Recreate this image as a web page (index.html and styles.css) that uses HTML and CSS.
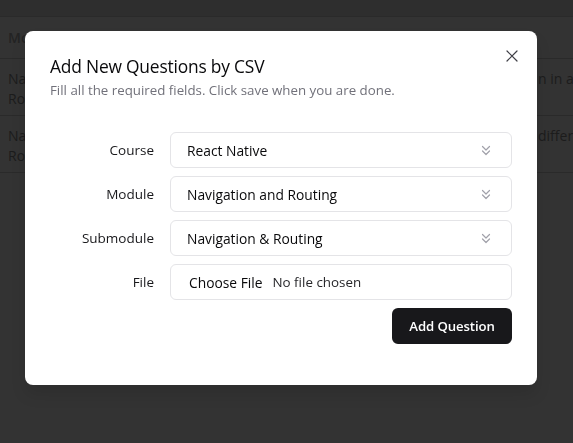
FILE: index.html
```html
<!DOCTYPE html>
<html>
<head>
<meta charset="utf-8">
<link rel="stylesheet" href="styles.css">
</head>
<body>
<div class="page">
  <div class="topband"></div>
  <div class="row head"><span class="c1">Module</span><span class="c2"></span></div>
  <div class="row"><span class="c1">Navigation and<br>Routing</span><span class="c2">n in a React Native app</span></div>
  <div class="row"><span class="c1">Navigation and<br>Routing</span><span class="c2">different navigators</span></div>
</div>
<div class="overlay">
  <div class="modal">
    <button class="close" aria-label="Close">
      <svg width="12" height="12" viewBox="0 0 12 12" fill="none" stroke="#3f3f46" stroke-width="1.2" stroke-linecap="round"><path d="M1 1l10 10M11 1 1 11"/></svg>
    </button>
    <div class="header">
      <h2 class="title">Add New Questions by CSV</h2>
      <p class="desc">Fill all the required fields. Click save when you are done.</p>
    </div>
    <div class="form">
      <div class="frow">
        <label class="lbl">Course</label>
        <div class="field select"><span>React Native</span><svg class="chev" width="10" height="11" viewBox="0 0 10 11" fill="none" stroke="#a1a1aa" stroke-width="1.2" stroke-linecap="round" stroke-linejoin="round"><path d="M1.5 1.5 5 5 8.5 1.5M1.5 6 5 9.5 8.5 6"/></svg></div>
      </div>
      <div class="frow">
        <label class="lbl">Module</label>
        <div class="field select"><span>Navigation and Routing</span><svg class="chev" width="10" height="11" viewBox="0 0 10 11" fill="none" stroke="#a1a1aa" stroke-width="1.2" stroke-linecap="round" stroke-linejoin="round"><path d="M1.5 1.5 5 5 8.5 1.5M1.5 6 5 9.5 8.5 6"/></svg></div>
      </div>
      <div class="frow">
        <label class="lbl">Submodule</label>
        <div class="field select"><span>Navigation &amp; Routing</span><svg class="chev" width="10" height="11" viewBox="0 0 10 11" fill="none" stroke="#a1a1aa" stroke-width="1.2" stroke-linecap="round" stroke-linejoin="round"><path d="M1.5 1.5 5 5 8.5 1.5M1.5 6 5 9.5 8.5 6"/></svg></div>
      </div>
      <div class="frow">
        <label class="lbl">File</label>
        <div class="field file"><span class="choose">Choose File</span><span class="nofile">No file chosen</span></div>
      </div>
    </div>
    <div class="footer">
      <button class="btn">Add Question</button>
    </div>
  </div>
</div>
</body>
</html>
```
FILE: styles.css
```css
* { box-sizing: border-box; }
html, body { margin: 0; padding: 0; }
body {
  width: 573px; height: 443px; overflow: hidden;
  background: #333333;
  font-family: "Open Sans", "Noto Sans", sans-serif;
  color: #1f1f1f;
}
.page { width: 573px; }
.topband { height: 17px; background: #2e2e2e; border-bottom: 1px solid #2a2a2a; }
.row {
  display: flex; justify-content: space-between;
  border-bottom: 1px solid #2a2a2a;
  height: 57px; padding: 10px 0 0 8px; font-size: 14px; line-height: 20px; color: #1c1c1c;
}
.row.head { height: 42px; padding-top: 11px; font-weight: 600; color: #232323; }
.c1 { width: 140px; white-space: nowrap; }
.c2 { width: 35px; overflow: hidden; white-space: nowrap; }
.overlay { position: fixed; inset: 0; }
.modal {
  position: absolute; left: 25px; top: 31px;
  width: 512px; height: 354px;
  background: #fff; border-radius: 8px;
  padding: 22px 25px 24px 25px;
  box-shadow: 0 10px 15px rgba(0,0,0,0.1);
}
.close {
  position: absolute; right: 19px; top: 19px;
  width: 12px; height: 12px; padding: 0; border: 0; background: transparent;
  display: flex; align-items: center; justify-content: center;
}
.close svg { display: block; }
.header { display: flex; flex-direction: column; gap: 1px; }
.title { margin: 0; font-size: 17.4px; line-height: 26px; font-weight: 500; color: #09090b; letter-spacing: -0.2px; }
.desc { margin: 0; font-size: 13.3px; line-height: 20px; color: #71717a; }
.form { margin-top: 32px; display: flex; flex-direction: column; gap: 8px; }
.frow { display: grid; grid-template-columns: 104px 1fr; column-gap: 16px; align-items: center; }
.lbl { text-align: right; font-size: 13.5px; color: #18181b; }
.field {
  height: 36px; border: 1px solid #e4e4e7; border-radius: 6px;
  display: flex; align-items: center; font-size: 13.8px; color: #09090b;
}
.select { justify-content: space-between; padding: 0 20px 0 16px; }
.chev { display: block; }
.file { padding: 0 18px; }
.choose { font-weight: 500; margin-right: 10px; }
.nofile { color: #27272a; font-size: 13.4px; }
.footer { display: flex; justify-content: flex-end; margin-top: 8px; }
.btn {
  height: 36px; padding: 0; border: 0; border-radius: 6px;
  background: #18181b; color: #fff; font-family: inherit; font-size: 13.2px; font-weight: 600;
  width: 120px; white-space: nowrap; letter-spacing: -0.1px;
}
```
